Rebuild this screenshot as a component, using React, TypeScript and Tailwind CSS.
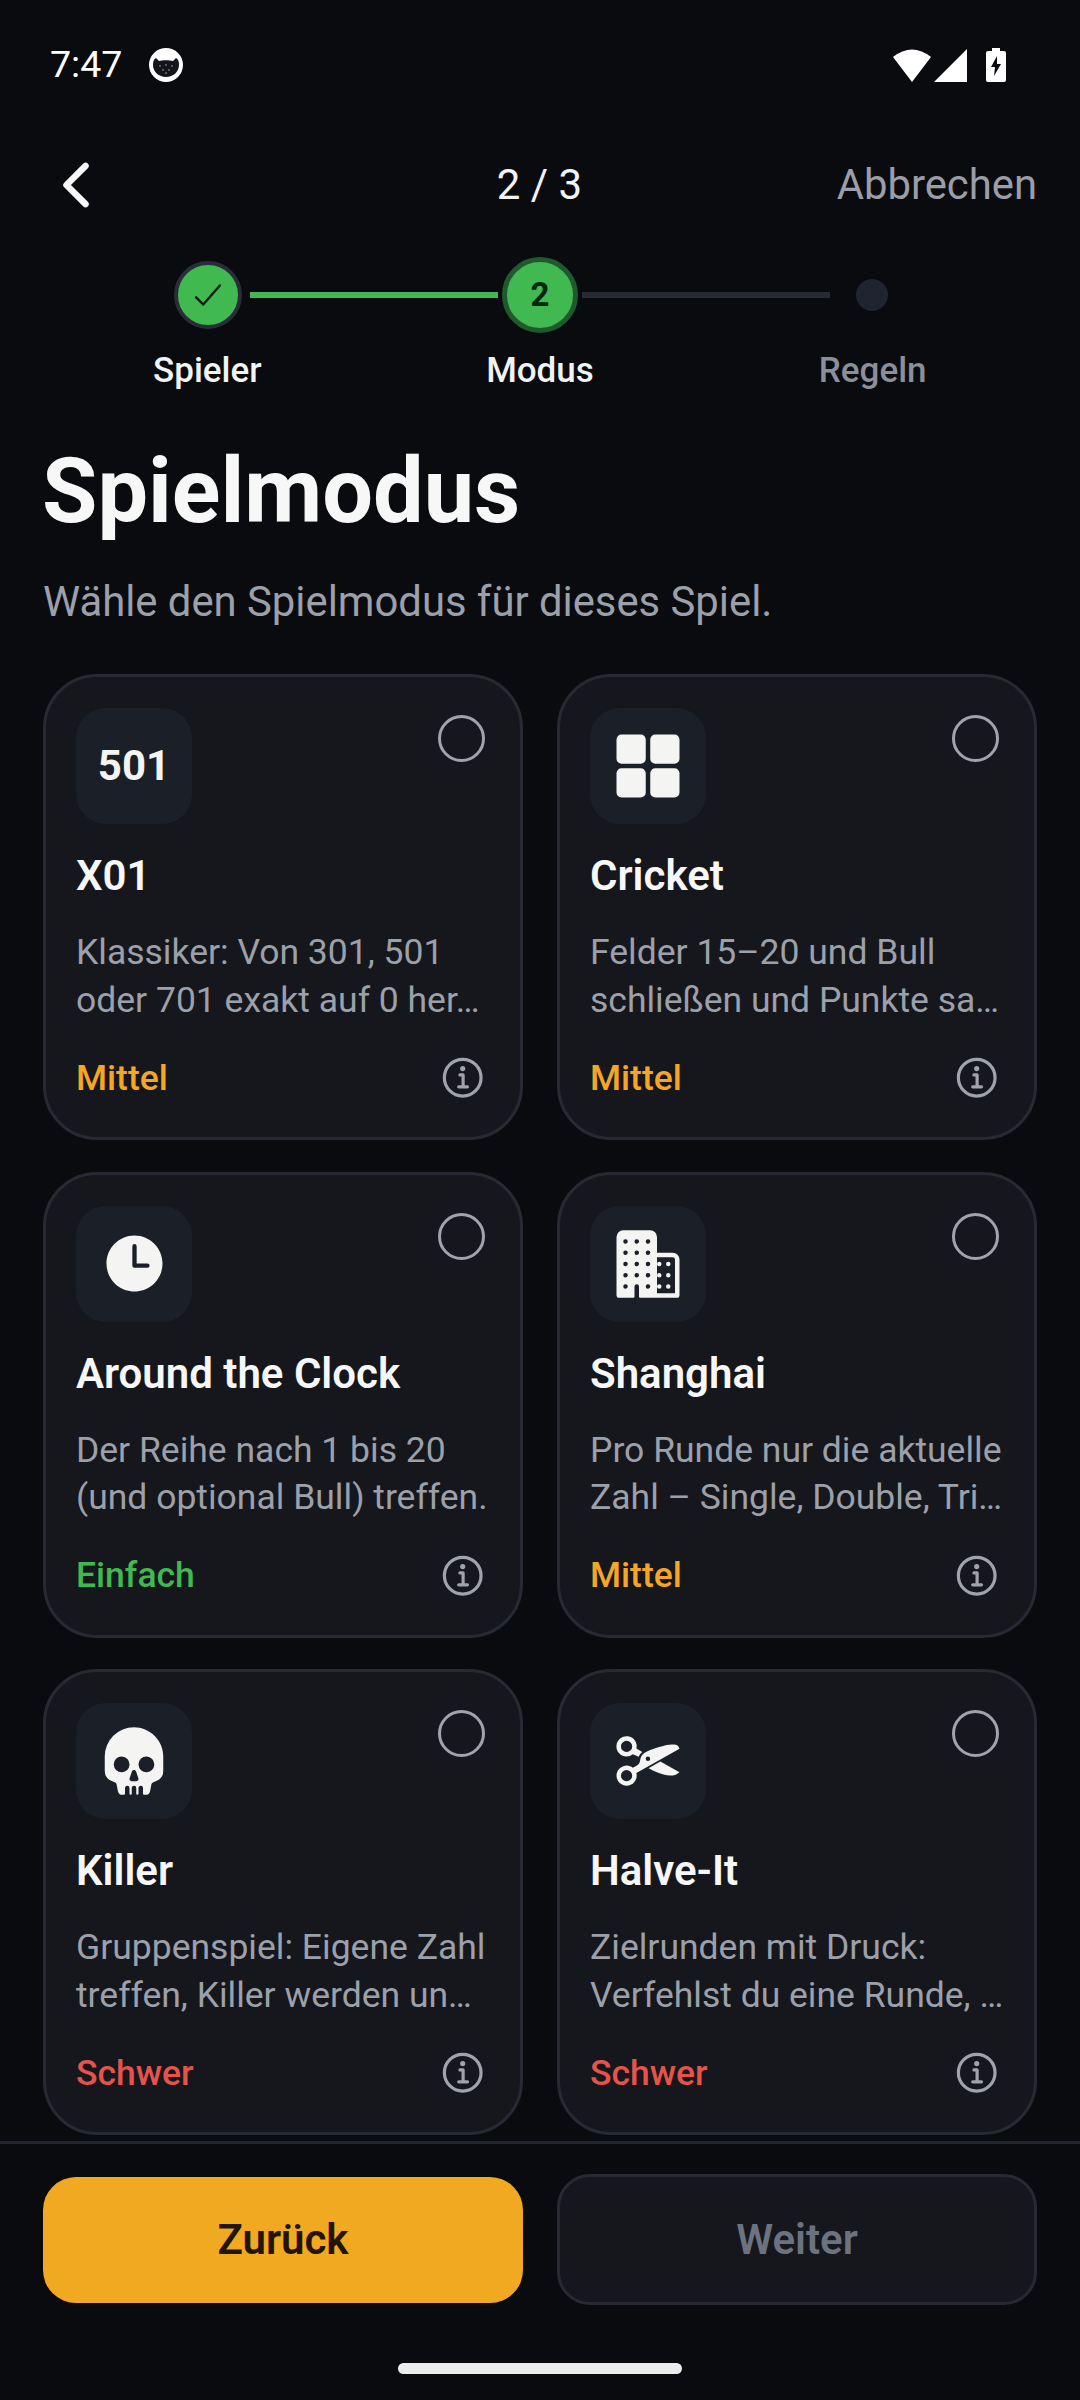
import type { ReactNode } from "react";
import {
  IoChevronBack,
  IoCheckmark,
  IoGrid,
  IoTime,
  IoBusiness,
  IoSkull,
  IoCut,
  IoInformationCircleOutline,
} from "react-icons/io5";

type Mode = {
  title: string;
  lines: [string, string];
  level: "Einfach" | "Mittel" | "Schwer";
  icon: ReactNode;
};

const levelColor = {
  Einfach: "text-[#3fb950]",
  Mittel: "text-[#f5a623]",
  Schwer: "text-[#e5534b]",
};

const modes: Mode[] = [
  {
    title: "X01",
    lines: ["Klassiker: Von 301, 501", "oder 701 exakt auf 0 her…"],
    level: "Mittel",
    icon: <span className="text-[42px] font-bold leading-none">501</span>,
  },
  {
    title: "Cricket",
    lines: ["Felder 15–20 und Bull", "schließen und Punkte sa…"],
    level: "Mittel",
    icon: <IoGrid size={72} />,
  },
  {
    title: "Around the Clock",
    lines: ["Der Reihe nach 1 bis 20", "(und optional Bull) treffen."],
    level: "Einfach",
    icon: <IoTime size={69} />,
  },
  {
    title: "Shanghai",
    lines: ["Pro Runde nur die aktuelle", "Zahl – Single, Double, Tri…"],
    level: "Mittel",
    icon: <IoBusiness size={72} />,
  },
  {
    title: "Killer",
    lines: ["Gruppenspiel: Eigene Zahl", "treffen, Killer werden un…"],
    level: "Schwer",
    icon: <IoSkull size={72} />,
  },
  {
    title: "Halve-It",
    lines: ["Zielrunden mit Druck:", "Verfehlst du eine Runde, …"],
    level: "Schwer",
    icon: <IoCut size={72} />,
  },
];

function StatusBar() {
  return (
    <div className="flex h-[130px] items-center justify-between pl-[50px] pr-[74px]">
      <div className="flex items-center gap-[27px]">
        <span className="text-[37.5px] leading-none text-white">7:47</span>
        <svg width="34" height="34" viewBox="0 0 34 34">
          <circle cx="17" cy="17" r="17" fill="#fff" />
          <path
            d="M4 17 C4 13 5 11 7 10 L10 13 C13 12 21 12 24 13 L27 10 C29 11 30 13 30 17 C30 24 24 29 17 29 C10 29 4 24 4 17 Z"
            fill="#14151a"
          />
          <g fill="#6b6d73">
            <circle cx="11" cy="18" r="1" />
            <circle cx="17" cy="17" r="1" />
            <circle cx="23" cy="18" r="1" />
            <circle cx="14" cy="22" r="1" />
            <circle cx="20" cy="22" r="1" />
            <circle cx="17" cy="25" r="1" />
          </g>
        </svg>
      </div>
      <div className="flex items-center">
        <svg width="38" height="33" viewBox="0 0 38 33" className="mr-[3px]">
          <path d="M0 8 Q19 -7 38 8 L19 33 Z" fill="#fff" />
        </svg>
        <svg width="33" height="33" viewBox="0 0 33 33" className="mr-[19px]">
          <path d="M33 0 V33 H0 Z" fill="#fff" />
        </svg>
        <svg width="20" height="34" viewBox="0 0 20 34">
          <path
            d="M6 0 H14 V3 H18 Q20 3 20 5 V32 Q20 34 18 34 H2 Q0 34 0 32 V5 Q0 3 2 3 H6 Z"
            fill="#fff"
          />
          <path d="M11 8 L5 19 H9 L8 28 L15 16 H11 Z" fill="#0a0b0e" />
        </svg>
      </div>
    </div>
  );
}

function Stepper() {
  return (
    <div className="pt-[17px]">
      <div className="flex items-center pl-[174px]">
        <div className="flex h-[68px] w-[68px] items-center justify-center rounded-full border-[4px] border-[#2a2d38] bg-[#3fb950] text-[#0a1a0e]">
          <IoCheckmark size={38} />
        </div>
        <div className="ml-[8px] h-[6px] w-[248px] bg-[#3fb950]" />
        <div className="ml-[4px] flex h-[76px] w-[76px] items-center justify-center rounded-full border-[5px] border-[#1f5a2f] bg-[#3fb950] text-[33px] font-bold text-[#06260f]">
          2
        </div>
        <div className="ml-[4px] h-[6px] w-[248px] bg-[#272a35]" />
        <div className="ml-[26px] h-[32px] w-[32px] rounded-full bg-[#1f2430]" />
      </div>
      <div className="mx-auto mt-[16px] grid w-[998px] grid-cols-3 text-center text-[35px] font-medium leading-[44px]">
        <span className="text-[#f2f3f5]">Spieler</span>
        <span className="text-[#f2f3f5]">Modus</span>
        <span className="text-[#8b8f99]">Regeln</span>
      </div>
    </div>
  );
}

function ModeCard({ mode }: { mode: Mode }) {
  return (
    <div className="flex h-[466px] flex-col rounded-[54px] border-[3px] border-[#272a33] bg-[#15171c] px-[30px] pt-[31px]">
      <div className="flex items-start justify-between">
        <div className="flex h-[116px] w-[116px] items-center justify-center rounded-[30px] bg-[#1b1f28] text-[#f4f4f2]">
          {mode.icon}
        </div>
        <div className="mr-[5px] mt-[7px] h-[47px] w-[47px] rounded-full border-[3px] border-[#a0a3ab]" />
      </div>
      <div className="mt-[26px] text-[42px] font-semibold leading-[52px] text-[#f7f7f7]">{mode.title}</div>
      <p className="mt-[27px] whitespace-nowrap text-[35.5px] leading-[47.5px] text-[#9ca0aa]">
        {mode.lines[0]}
        <br />
        {mode.lines[1]}
      </p>
      <div className="mt-[27px] flex items-center justify-between">
        <span className={`text-[35.5px] font-medium leading-[48px] ${levelColor[mode.level]}`}>{mode.level}</span>
        <IoInformationCircleOutline size={51} className="mr-[1px] mt-[2px] text-[#a0a3ab]" />
      </div>
    </div>
  );
}

export default function App() {
  return (
    <div
      className="relative h-[2400px] w-[1080px] overflow-hidden bg-[#0a0b0e]"
      style={{ fontFamily: 'Roboto, "Noto Sans", sans-serif' }}
    >
      <StatusBar />

      <div className="grid h-[110px] grid-cols-[1fr_auto_1fr] items-center pl-[42px] pr-[43px]">
        <IoChevronBack size={68} className="text-[#f7f7f7]" />
        <span className="text-[42px] leading-none text-[#f2f3f5]">2 / 3</span>
        <span className="justify-self-end text-[41.8px] leading-none text-[#9a9ea8]">Abbrechen</span>
      </div>

      <Stepper />

      <div className="px-[43px]">
        <h1 className="-ml-[1px] mt-[49px] text-[90px] font-bold leading-[100px] text-[#f7f7f7]">Spielmodus</h1>
        <p className="mt-[34px] text-[41.8px] leading-[52px] text-[#9ca0aa]">Wähle den Spielmodus für dieses Spiel.</p>
        <div className="mt-[46px] grid grid-cols-2 gap-x-[34px] gap-y-[31.5px]">
          {modes.map((mode) => (
            <ModeCard key={mode.title} mode={mode} />
          ))}
        </div>
      </div>

      <div className="mt-[6px] border-t-[3px] border-[#22252d] pt-[30px]">
        <div className="grid grid-cols-2 items-center gap-x-[34px] px-[43px]">
          <button className="h-[126px] rounded-[33px] bg-[#f2a922] text-[42px] font-semibold text-[#241503]">
            Zurück
          </button>
          <button className="h-[131px] rounded-[33px] border-[3px] border-[#272a33] bg-[#15171c] text-[42px] font-semibold text-[#6b7280]">
            Weiter
          </button>
        </div>
        <div className="mx-auto mt-[58px] h-[11px] w-[284px] rounded-full bg-[#ececec]" />
      </div>
    </div>
  );
}
